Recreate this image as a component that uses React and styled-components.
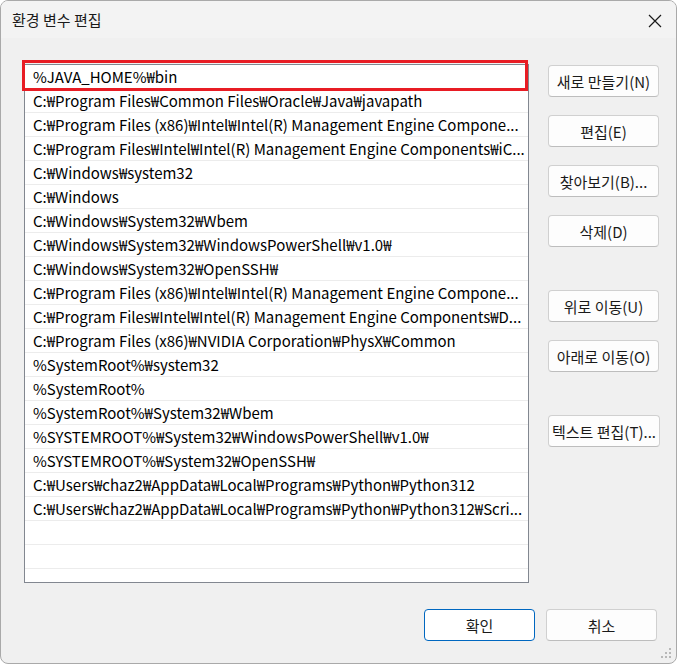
import React from "react";
import styled, { createGlobalStyle } from "styled-components";

const paths = [
  "%JAVA_HOME%₩bin",
  "C:₩Program Files₩Common Files₩Oracle₩Java₩javapath",
  "C:₩Program Files (x86)₩Intel₩Intel(R) Management Engine Compone...",
  "C:₩Program Files₩Intel₩Intel(R) Management Engine Components₩iC...",
  "C:₩Windows₩system32",
  "C:₩Windows",
  "C:₩Windows₩System32₩Wbem",
  "C:₩Windows₩System32₩WindowsPowerShell₩v1.0₩",
  "C:₩Windows₩System32₩OpenSSH₩",
  "C:₩Program Files (x86)₩Intel₩Intel(R) Management Engine Compone...",
  "C:₩Program Files₩Intel₩Intel(R) Management Engine Components₩D...",
  "C:₩Program Files (x86)₩NVIDIA Corporation₩PhysX₩Common",
  "%SystemRoot%₩system32",
  "%SystemRoot%",
  "%SystemRoot%₩System32₩Wbem",
  "%SYSTEMROOT%₩System32₩WindowsPowerShell₩v1.0₩",
  "%SYSTEMROOT%₩System32₩OpenSSH₩",
  "C:₩Users₩chaz2₩AppData₩Local₩Programs₩Python₩Python312",
  "C:₩Users₩chaz2₩AppData₩Local₩Programs₩Python₩Python312₩Scri...",
];

const sideButtons = [
  { label: "새로 만들기(N)", gap: 0 },
  { label: "편집(E)", gap: 18 },
  { label: "찾아보기(B)...", gap: 18 },
  { label: "삭제(D)", gap: 18 },
  { label: "위로 이동(U)", gap: 43 },
  { label: "아래로 이동(O)", gap: 18 },
  { label: "텍스트 편집(T)...", gap: 43 },
];

function App() {
  return (
    <>
      <GlobalStyle />
      <Window>
        <TitleBar>
          <Title>환경 변수 편집</Title>
          <CloseButton aria-label="닫기">
            <svg width="14" height="14" viewBox="0 0 14 14">
              <path d="M1 1 L13 13 M13 1 L1 13" stroke="#1a1a1a" strokeWidth="1.2" fill="none" />
            </svg>
          </CloseButton>
        </TitleBar>

        <Content>
          <ListFrame>
            <PathList>
              {paths.map((p, i) => (
                <Row key={i}>
                  <RowText>{p}</RowText>
                </Row>
              ))}
              <Row />
              <Row />
              <Row />
            </PathList>
            {/* red annotation box round the first entry */}
            <Highlight />
          </ListFrame>

          <SideColumn>
            {sideButtons.map((b) => (
              <Button key={b.label} $gap={b.gap}>
                {b.label}
              </Button>
            ))}
          </SideColumn>
        </Content>

        <Footer>
          <Button $primary>확인</Button>
          <Button>취소</Button>
        </Footer>
        <Grip>
          <svg width="12" height="12" viewBox="0 0 12 12">
            <g fill="#b8b8b8">
              <rect x="8" y="0" width="2" height="2" />
              <rect x="4" y="4" width="2" height="2" />
              <rect x="8" y="4" width="2" height="2" />
              <rect x="0" y="8" width="2" height="2" />
              <rect x="4" y="8" width="2" height="2" />
              <rect x="8" y="8" width="2" height="2" />
            </g>
          </svg>
        </Grip>
      </Window>
    </>
  );
}

const GlobalStyle = createGlobalStyle`
  body {
    margin: 0;
    background: #ffffff;
    font-family: "Noto Sans CJK KR", "Noto Sans", sans-serif;
  }
`;

const Window = styled.div`
  position: relative;
  box-sizing: border-box;
  width: 677px;
  height: 664px;
  background: #f0f0f0;
  border: 1px solid #a9a9a9;
  border-radius: 8px;
  overflow: hidden;
  display: flex;
  flex-direction: column;
  color: #000;
`;

const TitleBar = styled.div`
  height: 37px;
  display: flex;
  align-items: center;
  justify-content: space-between;
  padding: 0 14px 0 11px;
  background: #f3f3f3;
`;

const Title = styled.span`
  font-size: 15px;
  color: #1a1a1a;
`;

const CloseButton = styled.div`
  display: flex;
  align-items: center;
  padding-top: 3px;
`;

const Content = styled.div`
  display: flex;
  align-items: flex-start;
  padding: 26px 0 0 23px;
  gap: 19px;
`;

const ListFrame = styled.div`
  position: relative;
`;

const PathList = styled.div`
  box-sizing: border-box;
  width: 505px;
  height: 519px;
  background: #ffffff;
  border: 1px solid #828790;
  overflow: hidden;
`;

const Row = styled.div`
  box-sizing: border-box;
  height: 24px;
  padding: 0 8px;
  border-bottom: 1px solid #ececec;
  display: flex;
  align-items: center;
`;

const RowText = styled.span`
  font-size: 15px;
  white-space: nowrap;
  color: #000;
`;

const Highlight = styled.div`
  position: absolute;
  left: -2px;
  top: -4px;
  width: 506px;
  height: 31px;
  box-sizing: border-box;
  border: 3px solid #e81c24;
  pointer-events: none;
`;

const SideColumn = styled.div`
  display: flex;
  flex-direction: column;
  align-items: flex-start;
  padding-top: 1px;
`;

const Button = styled.div`
  box-sizing: border-box;
  min-width: 111px;
  height: 32px;
  margin-top: ${(p) => p.$gap || 0}px;
  padding: 0 3px;
  display: flex;
  align-items: center;
  justify-content: center;
  font-size: 15px;
  white-space: nowrap;
  background: ${(p) => (p.$primary ? "#ffffff" : "#fdfdfd")};
  border: ${(p) => (p.$primary ? "1.5px solid #0067c0" : "1px solid #d0d0d0")};
  border-bottom-color: ${(p) => (p.$primary ? "#0067c0" : "#bdbdbd")};
  border-radius: 4px;
  color: #1a1a1a;
`;

const Footer = styled.div`
  display: flex;
  justify-content: flex-end;
  gap: 11px;
  padding: 26px 19px 0 0;
`;

const Grip = styled.div`
  position: absolute;
  right: 3px;
  bottom: 3px;
  line-height: 0;
`;

export default App;
